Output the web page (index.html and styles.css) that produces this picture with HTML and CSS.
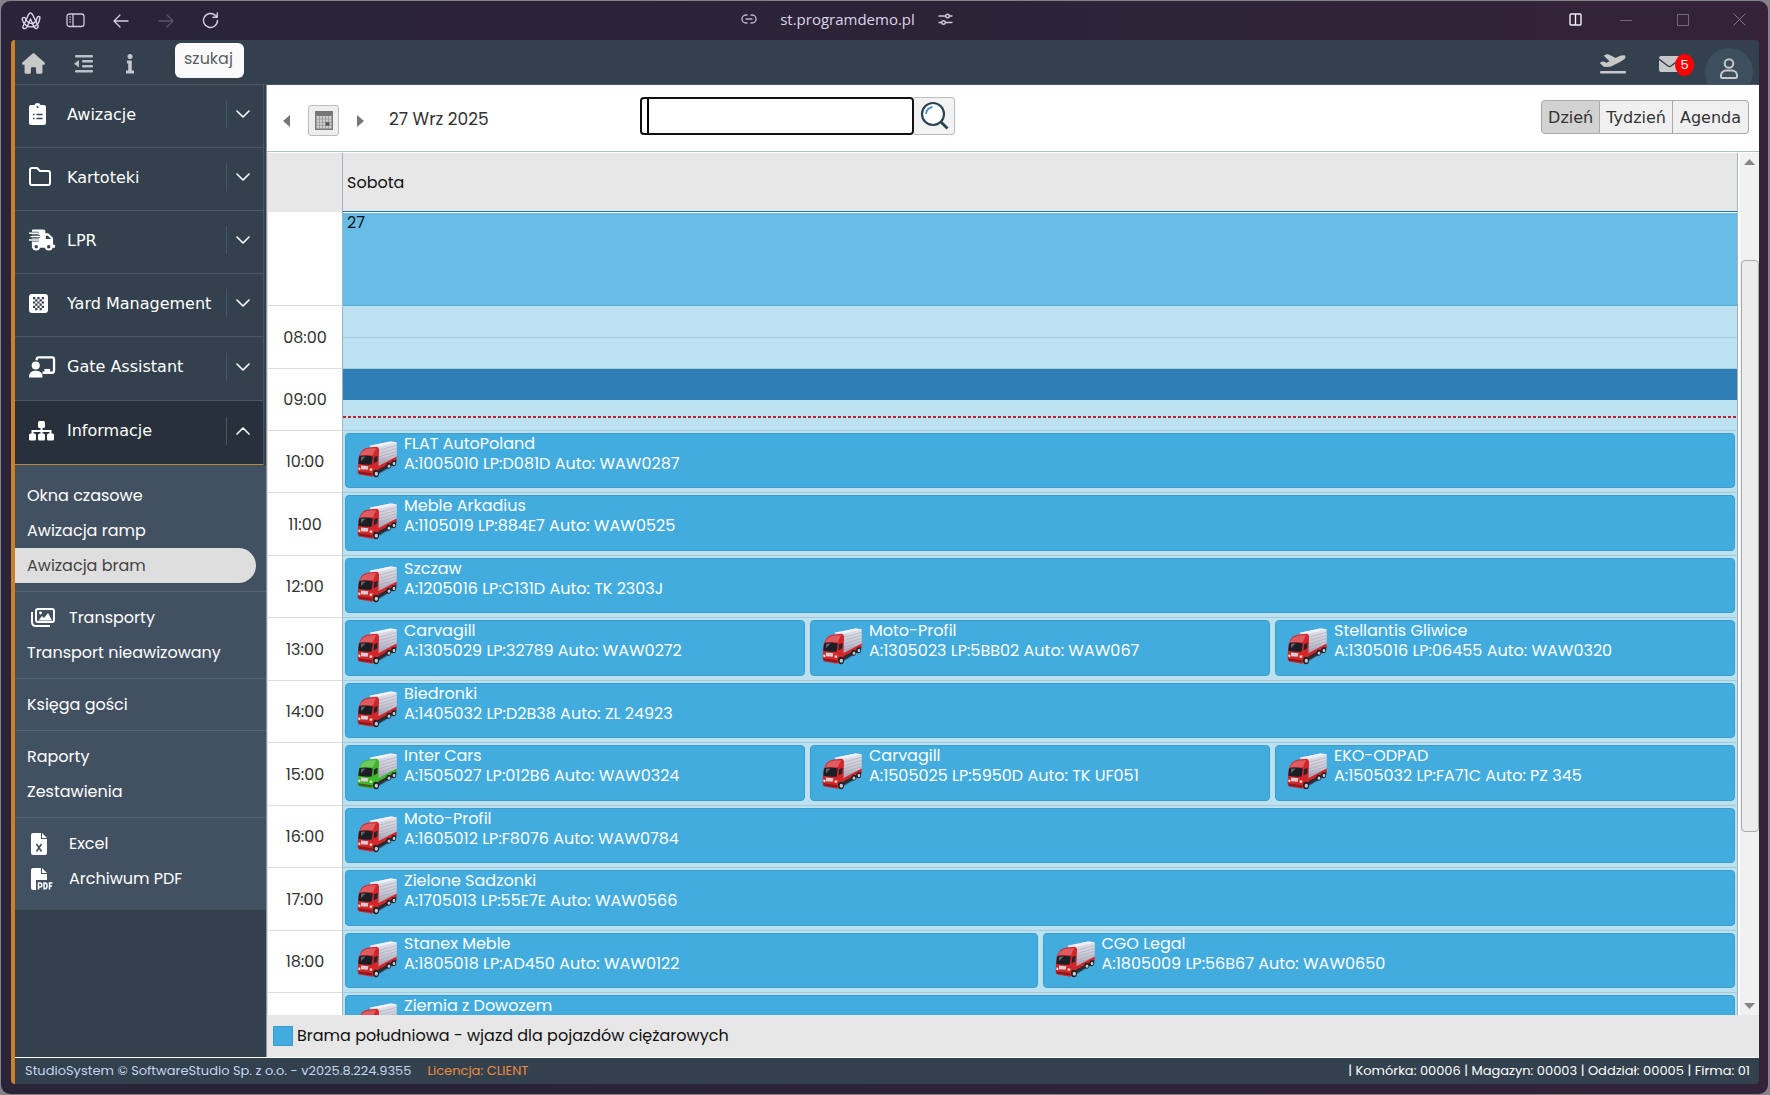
FILE: index.html
```html
<!DOCTYPE html>
<html lang="pl">
<head>
    <meta charset="UTF-8">
    <meta name="viewport" content="width=device-width, initial-scale=1.0">
    <title>Awizacja bram</title>
    <link rel="stylesheet" href="styles.css">
</head>
<body>
    <svg class="symbols" aria-hidden="true">
        <defs>
            <linearGradient id="side" x1="0" y1="0" x2="0" y2="1">
                <stop offset="0" stop-color="#e4e4ee"/>
                <stop offset="0.5" stop-color="#c9c9d6"/>
                <stop offset="1" stop-color="#9a9aac"/>
            </linearGradient>
        </defs>
        <symbol id="truck" viewBox="0 0 120 110">
            <path d="M60 95 119 62 118 68 58 104z" fill="#1d3a52" opacity=".5"/>
            <path d="M38 14 100 1 119 3 119 54 62 84z" fill="url(#side)"/>
            <path d="M38 14 100 1 119 3 64 17z" fill="#f1f1f7"/>
            <path d="M66 27 118 13M66 37 118 22M66 47 118 31M66 57 118 40M66 66 118 49" stroke="#9c9cae" stroke-width="1.500" fill="none"/>
            <path d="M62 76 119 46 119 57 62 90z" fill="currentColor"/>
            <path d="M62 86 119 56 116 66 62 98z" fill="#2b2b33"/>
            <path d="M10 36Q14 23 36 19L60 17Q67 20 66 30L64 88 52 102 46 107 6 100Q1 98 2 88L4 50z" fill="currentColor"/>
            <path d="M14 33Q20 25 38 22L58 21Q52 28 48 42L9 42z" fill="#fff" opacity=".25"/>
            <path d="M7 45Q24 40 47 46L44 70Q24 72 4 68z" fill="#1b1e25"/>
            <path d="M12 47 26 46 12 60z" fill="#5d6672"/>
            <path d="M51 48 62 44 61 60 50 67z" fill="#22252d"/>
            <path d="M12 73 34 75 32 86 12 84z" fill="#d8cdd4"/>
            <path d="M3 90 46 96 45 103 6 98z" fill="#5a1016" opacity=".6"/>
            <path d="M4 79 10 80 10 87 4 86zM38 82 46 82 45 89 38 89z" fill="#f6e5c9"/>
            <ellipse cx="57" cy="97" rx="9" ry="11" fill="#202126"/>
            <ellipse cx="58" cy="98" rx="5" ry="6" fill="#c6c9ce"/>
            <ellipse cx="95" cy="74" rx="7" ry="9" fill="#202126"/>
            <ellipse cx="96" cy="75" rx="4" ry="5" fill="#c6c9ce"/>
            <ellipse cx="110" cy="66" rx="7" ry="9" fill="#202126"/>
            <ellipse cx="111" cy="67" rx="4" ry="5" fill="#c6c9ce"/>
        </symbol>
        <symbol id="chevron" viewBox="0 0 14 8">
            <path d="M1 1 7 7 13 1" fill="none" stroke="#fff" stroke-width="1.6" stroke-linecap="round" stroke-linejoin="round"/>
        </symbol>
    </svg>

    <div class="window">
        <header class="browser-bar">
            <div class="browser-nav">
                <button aria-label="Arc"><svg width="20" height="18" viewBox="0 0 20 18" fill="none" stroke="#dcd6ea" stroke-width="1.4" stroke-linejoin="round" stroke-linecap="round"><path d="M2 14.500 7.500 2.500Q9.500-.5 11.500 2.500L17 13.500Q17.500 16 15.500 16.500 13.800 16.500 13 15L9.500 7 6 15Q5 17 3 16.500 1.300 15.800 2 14.500z"/><path d="M1.500 6Q3.500 4.500 4.500 6.500 6.500 11.500 11 11.500 15 11 16 6 17 3.500 19 5 18.500 12.500 13 14.500 5 16.500 1.500 8.500 1 7 1.500 6z"/></svg></button>
                <button aria-label="Panel boczny"><svg width="19" height="15" viewBox="0 0 19 15" fill="none" stroke="#cfc8de" stroke-width="1.300"><rect x="1" y="1" width="17" height="12.500" rx="2.500"/><path d="M7 1v12.500M3.500 4h1.200M3.500 6.500h1.200M3.500 9h1.200"/></svg></button>
                <button aria-label="Wstecz"><svg width="16" height="14" viewBox="0 0 16 14" fill="none" stroke="#d5cfe2" stroke-width="1.300" stroke-linecap="round" stroke-linejoin="round"><path d="M15 7H1M7 1 1 7 7 13"/></svg></button>
                <button aria-label="Dalej" disabled><svg width="16" height="14" viewBox="0 0 16 14" fill="none" stroke="#5d566b" stroke-width="1.300" stroke-linecap="round" stroke-linejoin="round"><path d="M1 7H15M9 1 15 7 9 13"/></svg></button>
                <button aria-label="Odśwież"><svg width="17" height="17" viewBox="0 0 17 17" fill="none" stroke="#d5cfe2" stroke-width="1.400" stroke-linecap="round" stroke-linejoin="round"><path d="M15.500 8.500A7 7 0 1 1 13.500 3.600L15 5M15.300 1V5.200H11"/></svg></button>
            </div>
            <div class="address">
                <svg width="16" height="10" viewBox="0 0 16 10" fill="none" stroke="#bdb4cb" stroke-width="1.400" stroke-linecap="round"><path d="M6 1H5A4 4 0 0 0 5 9H6M10 1H11A4 4 0 0 1 11 9H10M5 5H11"/></svg>
                <span>st.programdemo.pl</span>
                <svg width="15" height="12" viewBox="0 0 15 12" fill="none" stroke="#cfc8de" stroke-width="1.400" stroke-linecap="round"><path d="M1 3H7M12 3H14M1 9.500H3M8 9.500H14"/><circle cx="9.500" cy="3" r="1.800"/><circle cx="5.500" cy="9.500" r="1.800"/></svg>
            </div>
            <div class="window-buttons">
                <button aria-label="Podziel widok"><svg width="13" height="13" viewBox="0 0 13 13" fill="none" stroke="#f4f0fa" stroke-width="1.400"><rect x="1" y="1" width="11" height="11" rx="1"/><path d="M6.500 1V12"/></svg></button>
                <button aria-label="Minimalizuj"><svg width="12" height="12" viewBox="0 0 12 12" stroke="#75687b"><path d="M0 6.500H12"/></svg></button>
                <button aria-label="Maksymalizuj"><svg width="12" height="12" viewBox="0 0 12 12" fill="none" stroke="#75687b"><rect x=".5" y=".5" width="11" height="11"/></svg></button>
                <button aria-label="Zamknij"><svg width="13" height="13" viewBox="0 0 13 13" stroke="#84778a"><path d="M.5.5 12.500 12.500M12.500.5.5 12.500"/></svg></button>
            </div>
        </header>

        <div class="app">
            <div class="topbar">
                <button aria-label="Start"><svg width="23" height="21" viewBox="0 0 576 512" fill="#c8c8c8"><path d="M575.8 255.5c0 18-15 32.100-32 32.100h-32l.7 160.200c0 2.700-.2 5.400-.5 8.100V472c0 22.100-17.900 40-40 40H392c-22.100 0-40-17.900-40-40V384c0-17.700-14.300-32-32-32H256c-17.700 0-32 14.300-32 32v88c0 22.100-17.900 40-40 40H104c-22.100 0-40-17.900-40-40V287.600H32c-18 0-32-14-32-32.100c0-9 3-17 10-24L266.400 8c7-7 15-8 22-8s15 2 21 7L564.800 231.500c8 7 12 15 11 24z"/></svg></button>
                <button aria-label="Zwiń menu"><svg width="19" height="18" viewBox="0 0 19 18" fill="#b9c1c8"><rect x="1" width="18" height="2.600" rx="1"/><rect x="8" y="5" width="11" height="2.600" rx="1"/><rect x="8" y="10" width="11" height="2.600" rx="1"/><rect x="1" y="15" width="18" height="2.600" rx="1"/><path d="M0 8.800 5 5V12.600z"/></svg></button>
                <button aria-label="Informacje"><svg width="16" height="20" viewBox="0 0 16 20" fill="#c4c8cc"><circle cx="8" cy="2.600" r="2.500"/><path d="M5 6.500H9.800V16.500H12V19.500H4V16.500H6.200V9.500H5z"/></svg></button>
                <input class="menu-search" type="text" placeholder="szukaj" aria-label="szukaj">
                <div class="topbar-right">
                    <button aria-label="Odloty"><svg width="26" height="20" viewBox="0 0 26 20" fill="#c8c8c8"><rect y="17" width="26" height="2.500" rx="1"/><path d="M.3 8.600 2.600 7.500Q3 7.300 3.500 7.500L6.500 8.800 9.500 7.200 4.300 2.300Q3.800 1.500 4.800 1L7 .3Q8 0 8.700.4L15.800 4 19.500 2.100Q22.500.6 25 1.500 26.300 3.300 24.300 5.200L20 8 11.500 12.300Q10.500 12.800 9.300 12.800L5 12.900Q3.800 12.900 3 12L.2 9.400Q-.2 8.900.3 8.600z"/></svg></button>
                    <button class="mail" aria-label="Wiadomości"><svg width="21" height="16" viewBox="0 0 21 16"><rect width="21" height="16" rx="2" fill="#c8c8c8"/><path d="M0 3 9 10Q10.500 11 12 10L21 3" fill="none" stroke="#33414e" stroke-width="1.500"/></svg><span class="badge">5</span></button>
                    <button class="avatar" aria-label="Konto"><svg width="18" height="21" viewBox="0 0 18 21" fill="none" stroke="#c8c8c8" stroke-width="2"><circle cx="9" cy="5.500" r="4.300"/><path d="M1 17.500A5 5 0 0 1 6 12.500H12A5 5 0 0 1 17 17.500V18.500Q17 20 15.500 20H2.500Q1 20 1 18.500z"/></svg></button>
                </div>
            </div>

            <div class="content">
                <nav class="sidebar">
                    <a href="#" class="menu-item">
                        <svg class="icon" width="26" height="22" viewBox="0 0 26 22"><path d="M2 2H5.500Q6 0 8.500 0T11.500 2H15Q17 2 17 4V20Q17 22 15 22H2Q0 22 0 20V4Q0 2 2 2z" fill="#fff"/><circle cx="8.500" cy="4" r="1" fill="#33414e"/><path d="M4 11.500H5.500M7.500 11.500H13.500M4 15.500H5.500M7.500 15.500H13.500" stroke="#33414e" stroke-width="1.300"/></svg>
                        <span>Awizacje</span><svg class="arrow" width="14" height="8"><use href="#chevron"/></svg>
                    </a>
                    <a href="#" class="menu-item">
                        <svg class="icon" width="26" height="20" viewBox="0 0 26 20" fill="none" stroke="#fff" stroke-width="2"><path d="M3 1H8L11 4H19Q21 4 21 6V16Q21 18 19 18H3Q1 18 1 16V3Q1 1 3 1z"/></svg>
                        <span>Kartoteki</span><svg class="arrow" width="14" height="8"><use href="#chevron"/></svg>
                    </a>
                    <a href="#" class="menu-item">
                        <svg class="icon" width="27" height="22" viewBox="0 0 27 22"><path d="M4 0H15Q17 0 17 2V4H20L25 9V16H27V19H3V2Q3 0 4 0z" fill="#fff"/><path d="M0 4H10M1.500 7.500H11.500M0 11H10" stroke="#33414e" stroke-width="3"/><path d="M0 4H10M1.500 7.500H11.500M0 11H10" stroke="#fff" stroke-width="1.500"/><path d="M17.500 6.500H19.500L23 10H17.500z" fill="#33414e"/><circle cx="7.500" cy="18" r="4" fill="#fff"/><circle cx="7.500" cy="18" r="1.800" fill="#33414e"/><circle cx="20.500" cy="18" r="4" fill="#fff"/><circle cx="20.500" cy="18" r="1.800" fill="#33414e"/></svg>
                        <span>LPR</span><svg class="arrow" width="14" height="8"><use href="#chevron"/></svg>
                    </a>
                    <a href="#" class="menu-item">
                        <svg class="icon" width="26" height="19" viewBox="0 0 26 19"><rect width="19" height="19" rx="3" fill="#fff"/><path d="M4 3h2.200v2.200H4zM8.400 3h2.200v2.200H8.400zM12.800 3H15v2.200h-2.200zM6.200 5.200h2.200v2.200H6.200zM10.600 5.200h2.200v2.200h-2.200zM4 7.400h2.200v2.200H4zM8.400 7.400h2.200v2.200H8.400zM12.800 7.400H15v2.200h-2.200zM6.200 9.600h2.200v2.200H6.200zM10.600 9.600h2.200v2.200h-2.200zM4 11.800h2.200V14H4zM8.400 11.800h2.200V14H8.400zM12.800 11.800H15V14h-2.200zM6.200 14h2.200v2.200H6.200zM10.600 14h2.200v2.200h-2.200z" fill="#33414e"/></svg>
                        <span>Yard Management</span><svg class="arrow" width="14" height="8"><use href="#chevron"/></svg>
                    </a>
                    <a href="#" class="menu-item tall">
                        <svg class="icon" width="27" height="22" viewBox="0 0 27 22"><path d="M8 4V3Q8 1 10 1H24Q26 1 26 3V15Q26 17 24 17H14" fill="none" stroke="#fff" stroke-width="2.400"/><path d="M16 17V13H22V17z" fill="#fff"/><circle cx="7" cy="9.500" r="4.200" fill="#fff"/><path d="M0 22Q0 15 6 15H8Q14 15 14 22z" fill="#fff"/></svg>
                        <span>Gate Assistant</span><svg class="arrow" width="14" height="8"><use href="#chevron"/></svg>
                    </a>
                    <a href="#" class="menu-item tall open">
                        <svg class="icon" width="26" height="20" viewBox="0 0 26 20"><path d="M12.500 6V13M3.500 14V10H21.500V14" fill="none" stroke="#fff" stroke-width="2"/><rect x="9" width="7" height="7" rx="1.500" fill="#fff"/><rect y="12.500" width="7" height="7" rx="1.500" fill="#fff"/><rect x="9" y="12.500" width="7" height="7" rx="1.500" fill="#fff"/><rect x="18" y="12.500" width="7" height="7" rx="1.500" fill="#fff"/></svg>
                        <span>Informacje</span><svg class="arrow up" width="14" height="8"><use href="#chevron"/></svg>
                    </a>
                    <div class="submenu">
                        <a href="#">Okna czasowe</a>
                        <a href="#">Awizacja ramp</a>
                        <a href="#" class="active">Awizacja bram</a>
                        <hr>
                        <a href="#"><svg class="icon" width="25" height="20" viewBox="0 0 25 20" fill="none" stroke="#fff" stroke-width="2"><rect x="5" y="1" width="18" height="13" rx="2"/><path d="M1 4V14Q1 18 5 18H19"/><path d="M7.500 12.500 11 8 13 10 17 5 21 12.500z" fill="#fff" stroke="none"/><circle cx="9.500" cy="5" r="1.400" fill="#fff" stroke="none"/></svg>Transporty</a>
                        <a href="#">Transport nieawizowany</a>
                        <hr>
                        <a href="#">Księga gości</a>
                        <hr>
                        <a href="#">Raporty</a>
                        <a href="#">Zestawienia</a>
                        <hr>
                        <a href="#"><svg class="icon" width="25" height="22" viewBox="0 0 25 22"><path d="M2 0H10V6H16V20Q16 22 14 22H2Q0 22 0 20V2Q0 0 2 0z" fill="#fff"/><path d="M11 0 16 5H11z" fill="#fff"/><path d="M5.500 11 10.500 18.500M10.500 11 5.500 18.500" stroke="#425161" stroke-width="1.600"/></svg>Excel</a>
                        <a href="#"><svg class="icon" width="25" height="22" viewBox="0 0 25 22"><path d="M2 0H10V6H16V12H5V22H2Q0 22 0 20V2Q0 0 2 0z" fill="#fff"/><path d="M11 0 16 5H11z" fill="#fff"/><path d="M7.500 21.500V15H9Q10.800 15 10.800 17T9 19H7.500M13 15V20.700H14Q16 20.700 16 18V17.500Q16 15 14 15zM18.500 21.500V15H21.500M18.500 18H21" fill="none" stroke="#fff" stroke-width="1.500"/></svg>Archiwum PDF</a>
                    </div>
                </nav>

                <main class="main">
                    <div class="toolbar">
                        <div class="date-nav">
                            <button aria-label="Poprzedni"><svg width="7" height="12" viewBox="0 0 7 12" fill="#777"><path d="M7 0V12L0 6z"/></svg></button>
                            <button class="calendar-button" aria-label="Kalendarz"><svg width="18" height="19" viewBox="0 0 18 19"><rect width="18" height="19" fill="#777"/><path d="M1.500 5H16.500V17.500H1.500z" fill="#cfcfcf"/><path d="M4.500 5V17.500M7.500 5V17.500M10.500 5V17.500M13.500 5V17.500M1 8H17M1 11.200H17M1 14.400H17" stroke="#999" stroke-width=".8"/><rect x="10.500" y="11.200" width="4" height="3.500" fill="#555"/></svg></button>
                            <button aria-label="Następny"><svg width="7" height="12" viewBox="0 0 7 12" fill="#777"><path d="M0 0V12L7 6z"/></svg></button>
                            <span class="date">27 Wrz 2025</span>
                        </div>
                        <form class="search">
                            <input type="text" aria-label="Szukaj awizacji">
                            <button type="button" aria-label="Szukaj"><svg width="29" height="29" viewBox="0 0 29 29" fill="none"><circle cx="13" cy="13" r="11" fill="#fdfeff" stroke="#2b4351" stroke-width="2.200"/><path d="M20.500 20.500 27.500 27.500" stroke="#2b4351" stroke-width="2.800"/><path d="M6 13Q6.500 7 12.500 6" stroke="#4a8fd0" stroke-width="1.800"/></svg></button>
                        </form>
                        <div class="views">
                            <button class="selected">Dzień</button>
                            <button>Tydzień</button>
                            <button>Agenda</button>
                        </div>
                    </div>

                    <div class="calendar">
                        <div class="schedule">
                            <div class="row day-name"><div class="time"></div><div class="slot">Sobota</div></div>
                            <div class="hours">
                                <div class="row all-day"><div class="time"></div><div class="slot">27</div></div>
                                <div class="row hour first"><div class="time">08:00</div><div class="slot free"></div></div>
                                <div class="row hour second"><div class="time">09:00</div><div class="slot now"></div></div>
                                <div class="row hour"><div class="time">10:00</div><div class="slot">
                                    <div class="event"><svg class="truck"><use href="#truck"/></svg><p>FLAT AutoPoland<br>A:1005010 LP:D081D Auto: WAW0287</p></div>
                                </div></div>
                                <div class="row hour"><div class="time">11:00</div><div class="slot">
                                    <div class="event"><svg class="truck"><use href="#truck"/></svg><p>Meble Arkadius<br>A:1105019 LP:884E7 Auto: WAW0525</p></div>
                                </div></div>
                                <div class="row hour"><div class="time">12:00</div><div class="slot">
                                    <div class="event"><svg class="truck"><use href="#truck"/></svg><p>Szczaw<br>A:1205016 LP:C131D Auto: TK 2303J</p></div>
                                </div></div>
                                <div class="row hour"><div class="time">13:00</div><div class="slot">
                                    <div class="event"><svg class="truck"><use href="#truck"/></svg><p>Carvagill<br>A:1305029 LP:32789 Auto: WAW0272</p></div>
                                    <div class="event"><svg class="truck"><use href="#truck"/></svg><p>Moto-Profil<br>A:1305023 LP:5BB02 Auto: WAW067</p></div>
                                    <div class="event"><svg class="truck"><use href="#truck"/></svg><p>Stellantis Gliwice<br>A:1305016 LP:06455 Auto: WAW0320</p></div>
                                </div></div>
                                <div class="row hour"><div class="time">14:00</div><div class="slot">
                                    <div class="event"><svg class="truck"><use href="#truck"/></svg><p>Biedronki<br>A:1405032 LP:D2B38 Auto: ZL 24923</p></div>
                                </div></div>
                                <div class="row hour"><div class="time">15:00</div><div class="slot">
                                    <div class="event"><svg class="truck green"><use href="#truck"/></svg><p>Inter Cars<br>A:1505027 LP:012B6 Auto: WAW0324</p></div>
                                    <div class="event"><svg class="truck"><use href="#truck"/></svg><p>Carvagill<br>A:1505025 LP:5950D Auto: TK UF051</p></div>
                                    <div class="event"><svg class="truck"><use href="#truck"/></svg><p>EKO-ODPAD<br>A:1505032 LP:FA71C Auto: PZ 345</p></div>
                                </div></div>
                                <div class="row hour"><div class="time">16:00</div><div class="slot">
                                    <div class="event"><svg class="truck"><use href="#truck"/></svg><p>Moto-Profil<br>A:1605012 LP:F8076 Auto: WAW0784</p></div>
                                </div></div>
                                <div class="row hour"><div class="time">17:00</div><div class="slot">
                                    <div class="event"><svg class="truck"><use href="#truck"/></svg><p>Zielone Sadzonki<br>A:1705013 LP:55E7E Auto: WAW0566</p></div>
                                </div></div>
                                <div class="row hour"><div class="time">18:00</div><div class="slot">
                                    <div class="event"><svg class="truck"><use href="#truck"/></svg><p>Stanex Meble<br>A:1805018 LP:AD450 Auto: WAW0122</p></div>
                                    <div class="event"><svg class="truck"><use href="#truck"/></svg><p>CGO Legal<br>A:1805009 LP:56B67 Auto: WAW0650</p></div>
                                </div></div>
                                <div class="row hour"><div class="time"></div><div class="slot">
                                    <div class="event"><svg class="truck"><use href="#truck"/></svg><p>Ziemia z Dowozem</p></div>
                                </div></div>
                            </div>
                        </div>
                        <div class="scrollbar">
                            <svg width="11" height="6" viewBox="0 0 11 6" fill="#858585"><path d="M0 6 5.500 0 11 6z"/></svg>
                            <div class="track"><div class="thumb"></div></div>
                            <svg width="11" height="6" viewBox="0 0 11 6" fill="#858585"><path d="M0 0 5.500 6 11 0z"/></svg>
                        </div>
                    </div>

                    <div class="legend"><span class="swatch"></span>Brama południowa - wjazd dla pojazdów ciężarowych</div>
                </main>
            </div>

            <footer class="statusbar">
                <span class="version">StudioSystem © SoftwareStudio Sp. z o.o. - v2025.8.224.9355</span>
                <span class="licence">Licencja: CLIENT</span>
                <span class="place">| Komórka: 00006 | Magazyn: 00003 | Oddział: 00005 | Firma: 01</span>
            </footer>
        </div>
    </div>
</body>
</html>
```
FILE: styles.css
```css
* {
    box-sizing: border-box;
}
body {
    margin: 0;
    height: 100vh;
    padding: 1px 2px 1px 1px;
    display: flex;
    overflow: hidden;
    background-color: #85828c;
    font-family: Poppins, Inter, sans-serif;
    font-size: 16px;
    color: #333;
}
button {
    display: flex;
    align-items: center;
    justify-content: center;
    padding: 0;
    border: 0;
    background: none;
    font: inherit;
}
a {
    color: #fff;
    text-decoration: none;
}
.symbols {
    position: absolute;
    width: 0;
    height: 0;
}

/* browser window */
.window {
    flex: 1;
    min-width: 0;
    display: flex;
    flex-direction: column;
    padding: 0 9px 10px 10px;
    border-radius: 9px;
    background: linear-gradient(90deg, #292437, #2c2337 50%, #342338);
}
.browser-bar {
    flex: none;
    height: 39px;
    display: grid;
    grid-template-columns: 1fr auto 1fr;
    align-items: center;
}
.browser-nav {
    display: flex;
    margin-left: -3px;
}
.browser-nav button {
    width: 45px;
    height: 36px;
}
.address {
    display: flex;
    align-items: center;
    gap: 23px;
    padding-right: 76px;
    padding-bottom: 4px;
    font-family: "Open Sans", sans-serif;
    font-size: 15px;
    color: #ddd4ec;
}
.window-buttons {
    display: flex;
    justify-content: flex-end;
    margin-right: -9px;
    padding-bottom: 2px;
}
.window-buttons button {
    width: 57px;
    height: 36px;
}
.window-buttons button:first-child {
    width: 43px;
}

/* application */
.app {
    flex: 1;
    min-height: 0;
    display: flex;
    flex-direction: column;
    border-left: 4px solid #ca8127;
    border-radius: 4px;
    overflow: hidden;
    background-color: #33414e;
}
.topbar {
    flex: none;
    height: 45px;
    display: flex;
    align-items: center;
    gap: 29px;
    padding: 3px 6px 0 7px;
    border-bottom: 1px solid #4a5965;
    overflow: hidden;
}
.menu-search {
    width: 69px;
    height: 35px;
    margin: 0 0 6px 8px;
    padding: 0 9px 4px;
    border: 0;
    border-radius: 6px;
    background-color: #fafafa;
    font: inherit;
}
.menu-search::placeholder {
    color: #5a5f64;
    opacity: 1;
}
.topbar-right {
    display: flex;
    align-items: center;
    gap: 25px;
    margin-left: auto;
}
.mail {
    position: relative;
    padding-left: 8px;
}
.badge {
    position: absolute;
    left: 24px;
    top: -2px;
    width: 19px;
    height: 22px;
    border-radius: 50%;
    background-color: #f00;
    color: #fff;
    font-size: 13px;
    line-height: 22px;
}
.avatar {
    width: 48px;
    height: 48px;
    margin-top: 17px;
    padding-bottom: 8px;
    border-radius: 50%;
    background-color: #3d4e5f;
}
.content {
    flex: 1;
    min-height: 0;
    display: flex;
}

/* side menu */
.sidebar {
    flex: none;
    width: 252px;
    border-right: 1px solid #8b959e;
}
.menu-item {
    display: flex;
    align-items: center;
    height: 63px;
    margin-right: 2px;
    padding: 0 13px 4px 14px;
    border-right: 1px solid #46545f;
    border-bottom: 1px solid #4a5965;
    font-family: Verdana, "DejaVu Sans", sans-serif;
}
.menu-item.tall {
    height: 64px;
}
.icon {
    flex: none;
    margin-right: 12px;
    overflow: visible;
}
.menu-item .icon {
    width: 26px;
}
.menu-item .arrow {
    box-sizing: content-box;
    margin-left: auto;
    padding: 10px 0 10px 9px;
    border-left: 1px solid #475663;
}
.menu-item .up {
    padding: 10px 9px 10px 0;
    border-left: 0;
    border-right: 1px solid #475663;
    transform: rotate(180deg);
}
.menu-item.open {
    border-bottom-color: #b98a35;
    background-color: #28313b;
}
.submenu {
    padding: 13px 0 14px;
    background-color: #425161;
}
.submenu a {
    display: flex;
    align-items: center;
    height: 35px;
    padding-left: 12px;
}
.submenu .icon {
    margin: 0 13px 0 4px;
}
.submenu .active {
    margin-right: 10px;
    border-radius: 0 18px 18px 0;
    background-color: #dedede;
    color: #444;
}
.submenu hr {
    margin: 8px 0;
    border: 0;
    border-top: 1px solid #526373;
}

/* toolbar */
.main {
    flex: 1;
    min-width: 0;
    display: flex;
    flex-direction: column;
    background-color: #fff;
}
.toolbar {
    flex: none;
    height: 67px;
    display: grid;
    grid-template-columns: 9fr auto 20fr;
    align-items: center;
    padding: 0 10px 2px 16px;
    border-bottom: 1px solid #b5bec2;
}
.date-nav {
    display: flex;
    align-items: center;
    gap: 18px;
    padding-top: 7px;
}
.calendar-button {
    width: 31px;
    height: 31px;
    border: 1px solid #bbb;
    border-radius: 3px;
    background-color: #eee;
}
.date {
    margin: 0 0 4px 7px;
    font-size: 17px;
    white-space: nowrap;
}
.search {
    display: flex;
    padding-bottom: 3px;
}
.search input {
    width: 274px;
    height: 38px;
    border: 2px solid #111;
    border-radius: 4px;
    outline: 0;
    background: linear-gradient(#000, #000) 5px 0 / 2px 34px no-repeat;
    font: inherit;
}
.search button {
    width: 41px;
    height: 38px;
    border: 1px solid #bbb;
    border-left: 0;
    border-radius: 0 4px 4px 0;
    background-color: #f2f2f2;
}
.views {
    display: flex;
    justify-self: end;
}
.views button {
    height: 34px;
    padding: 0 6px;
    border: 1px solid #aaa;
    border-left-width: 0;
    background-color: #f0f0f0;
    font-family: Verdana, "DejaVu Sans", sans-serif;
    color: #333;
}
.views button:first-child {
    border-left-width: 1px;
    border-radius: 4px 0 0 4px;
}
.views button:last-child {
    border-radius: 0 4px 4px 0;
    padding: 0 7px;
}
.views .selected {
    background-color: #d2d2d2;
}

/* day schedule */
.calendar {
    flex: 1;
    min-height: 0;
    display: flex;
    padding-top: 1px;
    border-left: 1px solid #ddd;
}
.schedule {
    flex: 1;
    display: flex;
    flex-direction: column;
    min-width: 0;
}
.hours {
    flex: 1;
    min-height: 0;
    overflow: hidden;
}
.row {
    display: flex;
}
.time {
    flex: none;
    width: 75px;
    display: flex;
    align-items: center;
    justify-content: center;
    border-right: 1px solid #9fb4bd;
    border-bottom: 1px solid #ddd;
}
.slot {
    flex: 1;
    display: flex;
    min-width: 0;
    border-right: 1px solid #9fb4bd;
}
.day-name {
    height: 59px;
    color: #111;
}
.day-name .time {
    border-bottom-width: 0;
    background-color: #e7e7e7;
}
.day-name .slot {
    align-items: center;
    padding-left: 4px;
    border-bottom: 1px solid #257a9f;
    background-color: #e7e7e7;
}
.all-day {
    height: 94px;
    line-height: 20px;
    color: #111;
}
.all-day .slot {
    padding-left: 4px;
    border-top: 1px solid #fff;
    border-bottom: 1px solid #56acd4;
    background-color: #67bde5;
}
/* two hours take 125px */
.hour {
    height: 62px;
}
.hour:nth-child(odd),
.hour.first {
    height: 63px;
}
.hour.second {
    height: 62px;
}
.hour .slot {
    gap: 5px;
    padding: 2px 2px 4px;
    border-bottom: 1px solid #a5cbdb;
    background-color: #bce2f2;
}
.hour .free {
    background-image: linear-gradient(#a5cbdb, #a5cbdb);
    background-size: 100% 1px;
    background-position: 0 31px;
    background-repeat: no-repeat;
}
/* blocked half hour and the line of the current time */
.hour .now {
    background-image:
        repeating-linear-gradient(90deg, #b8262c 0 3px, transparent 3px 5px),
        linear-gradient(#2e7db5, #2e7db5);
    background-size: 100% 2px, 100% 31px;
    background-position: 0 47px, 0 0;
    background-repeat: no-repeat;
}
.event {
    flex: 1;
    min-width: 0;
    display: flex;
    align-items: flex-start;
    gap: 7px;
    padding-left: 11px;
    border: 1px solid #3a9dcc;
    border-radius: 4px;
    overflow: hidden;
    background-color: #43acdf;
    color: #fff;
}
.event p {
    margin: 0;
    line-height: 20px;
    white-space: nowrap;
}
.truck {
    flex: none;
    width: 40px;
    height: 37px;
    margin-top: 7px;
    color: #d3262b;
}
.truck.green {
    color: #3fb828;
}
.scrollbar {
    flex: none;
    width: 19px;
    margin-left: 2px;
    padding: 6px 0;
    display: flex;
    flex-direction: column;
    align-items: center;
    background-color: #f1f1f1;
}
.track {
    flex: 1;
    align-self: stretch;
    padding: 95px 0 0 1px;
}
.thumb {
    height: 77%;
    border: 1px solid #aaa;
    border-radius: 4px;
    background-color: #ececec;
}
.legend {
    flex: none;
    height: 42px;
    display: flex;
    align-items: center;
    gap: 4px;
    padding: 0 6px 1px;
    background-color: #e7e7e7;
    color: #111;
}
.swatch {
    width: 20px;
    height: 20px;
    border: 1px solid #3a9dcc;
    background-color: #43acdf;
}

.statusbar {
    flex: none;
    height: 27px;
    display: flex;
    align-items: center;
    gap: 16px;
    padding: 0 9px 0 10px;
    border-top: 1px solid #fff;
    font-size: 13px;
}
.version {
    color: #c3d5ee;
}
.licence {
    color: #f08a3c;
}
.place {
    margin-left: auto;
    color: #fff;
}
```
